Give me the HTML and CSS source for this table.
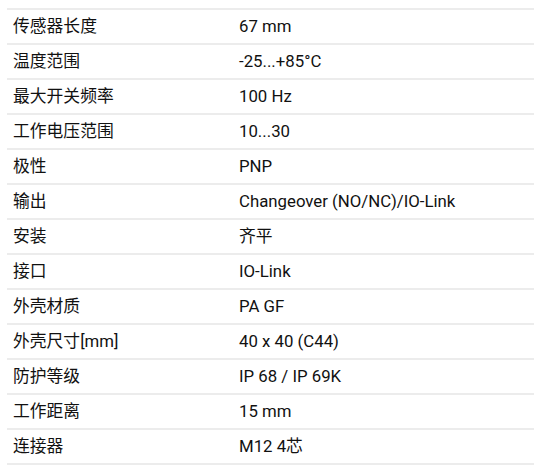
FILE: index.html
```html
<!DOCTYPE html>
<html lang="zh">
<head>
<meta charset="utf-8">
<link rel="stylesheet" href="styles.css">
</head>
<body>
<table class="spec">
<colgroup><col class="ck"><col class="cv"></colgroup>
<tbody>
<tr><td class="k">传感器长度</td><td class="v">67 mm</td></tr>
<tr><td class="k">温度范围</td><td class="v">-25...+85°C</td></tr>
<tr><td class="k">最大开关频率</td><td class="v">100 Hz</td></tr>
<tr><td class="k">工作电压范围</td><td class="v">10...30</td></tr>
<tr><td class="k">极性</td><td class="v">PNP</td></tr>
<tr><td class="k">输出</td><td class="v">Changeover (NO/NC)/IO-Link</td></tr>
<tr><td class="k">安装</td><td class="v">齐平</td></tr>
<tr><td class="k">接口</td><td class="v">IO-Link</td></tr>
<tr><td class="k">外壳材质</td><td class="v">PA GF</td></tr>
<tr><td class="k">外壳尺寸[mm]</td><td class="v">40 x 40 (C44)</td></tr>
<tr><td class="k">防护等级</td><td class="v">IP 68 / IP 69K</td></tr>
<tr><td class="k">工作距离</td><td class="v">15 mm</td></tr>
<tr><td class="k">连接器</td><td class="v">M12 4芯</td></tr>
</tbody>
</table>
</body>
</html>
```
FILE: styles.css
```css
html, body { background: #fff; }
body {
  margin: 8px 0 0 7px;
  font-family: Roboto, "Noto Sans CJK SC", sans-serif;
  font-size: 16.8px;
  color: #111;
}
.spec {
  width: 527px;
  border-collapse: collapse;
  table-layout: fixed;
}
.spec .ck { width: 226px; }
.spec td {
  height: 35px;
  box-sizing: border-box;
  border-top: 2px solid #ececec;
  padding: 0 6px 2px;
  vertical-align: middle;
  line-height: 20px;
  white-space: nowrap;
}
.spec tr:last-child td { border-bottom: 2px solid #ececec; }
```
